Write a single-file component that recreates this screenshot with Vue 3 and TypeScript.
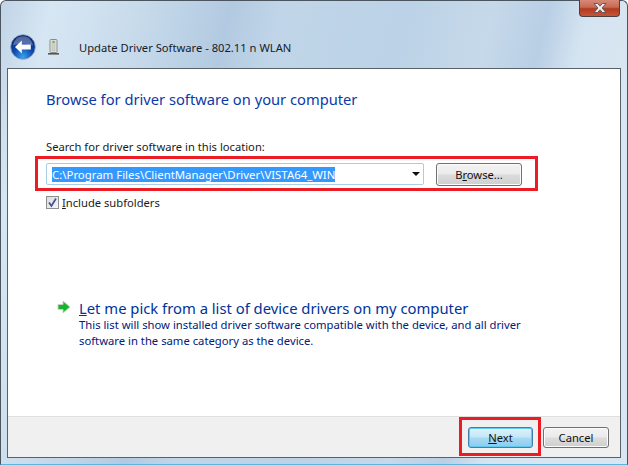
<script setup lang="ts">
const title = 'Update Driver Software - 802.11 n WLAN'
</script>

<template>
  <div class="window">
    <div class="caption">
      <div class="close">
        <svg width="20" height="12" viewBox="0 0 20 12">
          <path d="M4 1.500h3.500L10 4.200l2.500-2.700H16L12 6l4 4.500h-3.500L10 7.800l-2.500 2.700H4L8 6z" fill="#eef1f4" stroke="#5e5a5c" stroke-width="1" />
        </svg>
      </div>
    </div>
    <div class="nav">
      <svg class="back" width="26" height="26" viewBox="0 0 26 26">
        <defs>
          <radialGradient id="orb" cx="50%" cy="90%" r="78%">
            <stop offset="0" stop-color="#3aa0ee" />
            <stop offset="0.5" stop-color="#0f4fb4" />
            <stop offset="1" stop-color="#0a2470" />
          </radialGradient>
        </defs>
        <circle cx="13" cy="13" r="12.300" fill="url(#orb)" stroke="#8ba7c8" stroke-width="0.800" />
        <path d="M3 11.500C4 5.500 8 2.300 13 2.300S22 5.500 23 11.500C18 9 8 9 3 11.500z" fill="#fff" opacity=".3" />
        <path d="M5 13 11.800 6.500v4h9v5h-9v4z" fill="#fff" />
      </svg>
      <svg class="device" width="11" height="16" viewBox="0 0 11 16">
        <rect x="2" y="0.500" width="7" height="13" rx="1" fill="#e6e8e2" stroke="#8a8d86" />
        <rect x="4" y="2" width="3" height="10" fill="#cfd3cb" stroke="#a8aca4" stroke-width=".5" />
        <rect x="4.500" y="2" width="2" height="2" fill="#5fc15a" />
        <rect x="0" y="14" width="11" height="1.600" fill="#55584f" />
      </svg>
      <span class="title">{{ title }}</span>
    </div>
    <div class="panel">
      <div class="content">
        <h1 class="heading">Browse for driver software on your computer</h1>
        <div class="label">Search for driver software in this location:</div>
        <div class="mark-row">
          <div class="combo">
            <span class="combo-text"><span class="selected">C:\Program Files\ClientManager\Driver\VISTA64_WIN</span></span>
            <span class="caret"></span>
          </div>
          <button class="btn browse">B<u>r</u>owse...</button>
        </div>
        <label class="check">
          <span class="box">
            <svg width="11" height="11" viewBox="0 0 11 11">
              <path d="M2 5.500 4.400 9 9 1.500" fill="none" stroke="#3f4f9c" stroke-width="1.700" />
            </svg>
          </span>
          <span><u>I</u>nclude subfolders</span>
        </label>
        <div class="link-block">
          <svg class="arrow" width="14" height="14" viewBox="0 0 14 14">
            <path d="M1 4.500h5V1l7 6-7 6V9.500H1z" fill="#17b52b" stroke="#c6d2c6" stroke-width="1" />
          </svg>
          <div>
            <div class="link"><u>L</u>et me pick from a list of device drivers on my computer</div>
            <div class="desc">This list will show installed driver software compatible with the device, and all driver<br />software in the same category as the device.</div>
          </div>
        </div>
      </div>
      <div class="footer">
        <div class="next-mark">
          <button class="btn next"><u>N</u>ext</button>
        </div>
        <button class="btn cancel">Cancel</button>
      </div>
    </div>
  </div>
</template>

<style scoped>
.window {
  box-sizing: border-box;
  width: 628px;
  height: 465px;
  padding: 0 6px 6px 6px;
  display: flex;
  flex-direction: column;
  font-family: "Noto Sans", "Open Sans", sans-serif;
  font-size: 11.200px;
  color: #1a1a1a;
  border: 1px solid #4a5560;
  border-bottom-color: #5cb6dc;
  border-radius: 6px 6px 0 0;
  background: linear-gradient(103deg, #c0d4e6 0, #d7e6f3 50px, #c9dcec 130px, #b2cae1 225px, #c0d5e8 275px, #bcd2e6 400px, #c6d9ea 480px, #b9cfe5 535px, #d5e4f1 575px, #d8e6f2 628px);
}
.caption {
  height: 17px;
  display: flex;
  justify-content: flex-end;
  flex: none;
}
.close {
  width: 41px;
  height: 17px;
  margin-top: -1px;
  margin-right: 1px;
  box-sizing: border-box;
  border: 1px solid #4b3f42;
  border-top: 0;
  border-radius: 0 0 4px 4px;
  background: linear-gradient(#d58a78 0, #c9694f 45%, #b03a20 55%, #c8553a 100%);
  display: flex;
  align-items: center;
  justify-content: center;
}
.nav {
  height: 50px;
  flex: none;
  display: flex;
  align-items: center;
  padding: 8px 0 0 3px;
  box-sizing: border-box;
}
.back { flex: none; }
.device { margin-left: 12px; flex: none; }
.title {
  margin-left: 20px;
  font-size: 11.200px;
  color: #15202a;
  white-space: nowrap;
}
.panel {
  flex: 1;
  min-height: 0;
  display: flex;
  flex-direction: column;
  border: 1px solid #5b6168;
  background: #fff;
}
.content {
  flex: 1;
  min-height: 0;
  padding: 0 38px;
  box-sizing: border-box;
}
.heading {
  margin: 19px 0 0 0;
  font-size: 14.700px;
  font-weight: 400;
  line-height: 22px;
  color: #0a3aa8;
  white-space: nowrap;
}
.label {
  margin-top: 29px;
  line-height: 16px;
  white-space: nowrap;
}
.mark-row {
  box-sizing: border-box;
  width: 503px;
  height: 35px;
  margin: 1px 0 0 -11px;
  border: 3px solid #ec1c24;
  display: flex;
  align-items: flex-start;
  padding: 4px 0 0 8px;
}
.combo {
  box-sizing: border-box;
  width: 378px;
  height: 22px;
  border: 1px solid #a9cde4;
  border-radius: 2px;
  display: flex;
  align-items: center;
  padding-left: 5px;
  flex: none;
}
.combo-text { flex: 1; white-space: nowrap; font-size: 11.400px; }
.selected { display: inline-block; line-height: 15px; background: #3399ff; color: #fff; }
.caret {
  width: 0;
  height: 0;
  margin-right: 3px;
  border-left: 4px solid transparent;
  border-right: 4px solid transparent;
  border-top: 4px solid #111;
}
.btn {
  box-sizing: border-box;
  font: inherit;
  color: #111;
  height: 21px;
  padding: 0;
  border: 1px solid #707070;
  border-radius: 3px;
  background: linear-gradient(#f3f3f3 0, #ebebeb 48%, #dcdcdc 52%, #cfcfcf 100%);
  box-shadow: inset 0 0 0 1px #fbfbfb;
}
.browse { width: 86px; height: 23px; margin-left: 12px; flex: none; }
.check {
  display: flex;
  align-items: center;
  gap: 3px;
  height: 16px;
  margin-top: 3px;
  white-space: nowrap;
}
.box {
  box-sizing: border-box;
  width: 13px;
  height: 13px;
  border: 1px solid #8e8f8f;
  background: linear-gradient(135deg, #dcdcdc, #f6f6f6);
  display: flex;
  align-items: center;
  justify-content: center;
}
.link-block {
  display: flex;
  margin: 88px 0 0 11px;
  gap: 8px;
}
.arrow { margin-top: 2px; flex: none; }
.link {
  font-size: 14.800px;
  line-height: 20px;
  color: #003399;
  white-space: nowrap;
}
.desc {
  margin-top: -1px;
  line-height: 16px;
  font-size: 11.270px;
  color: #00207a;
  white-space: nowrap;
}
.footer {
  box-sizing: border-box;
  height: 41px;
  flex: none;
  position: relative;
  background: #f0f0f0;
  border-top: 1px solid #dfdfdf;
  display: flex;
  justify-content: flex-end;
  align-items: center;
  padding: 0 11px 0 0;
  gap: 10px;
}
.next-mark { position: relative; display: flex; }
.next-mark::after {
  content: "";
  position: absolute;
  left: -9px;
  right: -8px;
  top: -10px;
  bottom: -8px;
  border: 3px solid #ec1c24;
  pointer-events: none;
}
.next {
  width: 65px;
  border-color: #3c7fb1;
  background: linear-gradient(#dff3fc 0, #c3e7f8 48%, #a8daf4 52%, #8ccbee 100%);
  box-shadow: inset 0 0 0 1px #62c8f0;
}
.cancel { width: 66px; }
</style>

<style>
html, body { margin: 0; padding: 0; overflow: hidden; background: #fff; }
</style>
